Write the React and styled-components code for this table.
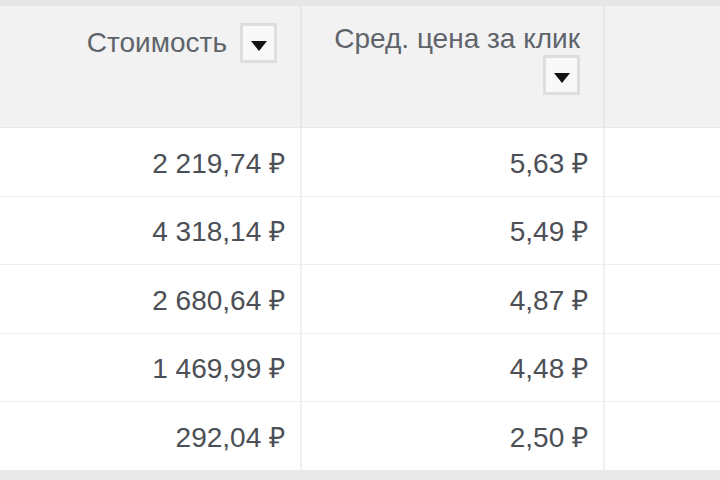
import React from "react";
import styled, { createGlobalStyle } from "styled-components";

const GlobalStyle = createGlobalStyle`
  html, body {
    margin: 0;
    padding: 0;
    background: #fff;
  }
  * {
    box-sizing: border-box;
  }
`;

// Frame with the grey strips at the top and bottom
const Frame = styled.div`
  width: 720px;
  height: 480px;
  overflow: hidden;
  border-top: 6px solid #e6e6e6;
  border-bottom: 10px solid #e9e9e9;
  font-family: "Liberation Sans", Arial, sans-serif;
  font-size: 28px;
`;

const Row = styled.div`
  display: grid;
  grid-template-columns: 302px 303px 1fr;
  height: ${({ h }) => h};
  background: ${({ head }) => (head ? "#f2f2f2" : "#fff")};
  border-bottom: 1px solid ${({ head }) => (head ? "#e8e8e8" : "#eeeeee")};
`;

const HeadCell = styled.div`
  display: flex;
  flex-wrap: wrap;
  justify-content: flex-end;
  align-content: flex-start;
  align-items: center;
  column-gap: 13px;
  padding: 17px 23px 0 10px;
  border-right: ${({ last }) => (last ? "none" : "2px solid #e6e6e6")};
  color: #5f646b;
  line-height: 32px;
`;

const Label = styled.span`
  white-space: nowrap;
`;

const SortButton = styled.span`
  display: flex;
  align-items: center;
  justify-content: center;
  width: 37px;
  height: 40px;
  padding-top: 5px;
  background: #f8f8f8;
  border: 3px solid #dedede;
`;

const Cell = styled.div`
  display: flex;
  align-items: center;
  justify-content: flex-end;
  padding: 0 15px 0 10px;
  border-right: ${({ last }) => (last ? "none" : "2px solid #f1f1f1")};
  color: #4c5056;
  white-space: nowrap;
`;

const Caret = () => (
  <svg width="18" height="12" viewBox="0 0 18 12">
    <path d="M1 1h16L9 11z" fill="#111" />
  </svg>
);

const rows = [
  { cost: "2 219,74 ₽", cpc: "5,63 ₽" },
  { cost: "4 318,14 ₽", cpc: "5,49 ₽" },
  { cost: "2 680,64 ₽", cpc: "4,87 ₽" },
  { cost: "1 469,99 ₽", cpc: "4,48 ₽" },
  { cost: "292,04 ₽", cpc: "2,50 ₽" },
];

const App = () => (
  <>
    <GlobalStyle />
    <Frame>
      <Row head h="122px">
        <HeadCell>
          <Label>Стоимость</Label>
          <SortButton>
            <Caret />
          </SortButton>
        </HeadCell>
        <HeadCell>
          <Label>Сред. цена за клик</Label>
          <SortButton>
            <Caret />
          </SortButton>
        </HeadCell>
        <HeadCell last />
      </Row>
      {rows.map((row, index) => (
        <Row key={index} h="68.5px">
          <Cell>{row.cost}</Cell>
          <Cell>{row.cpc}</Cell>
          <Cell last />
        </Row>
      ))}
    </Frame>
  </>
);

export default App;
